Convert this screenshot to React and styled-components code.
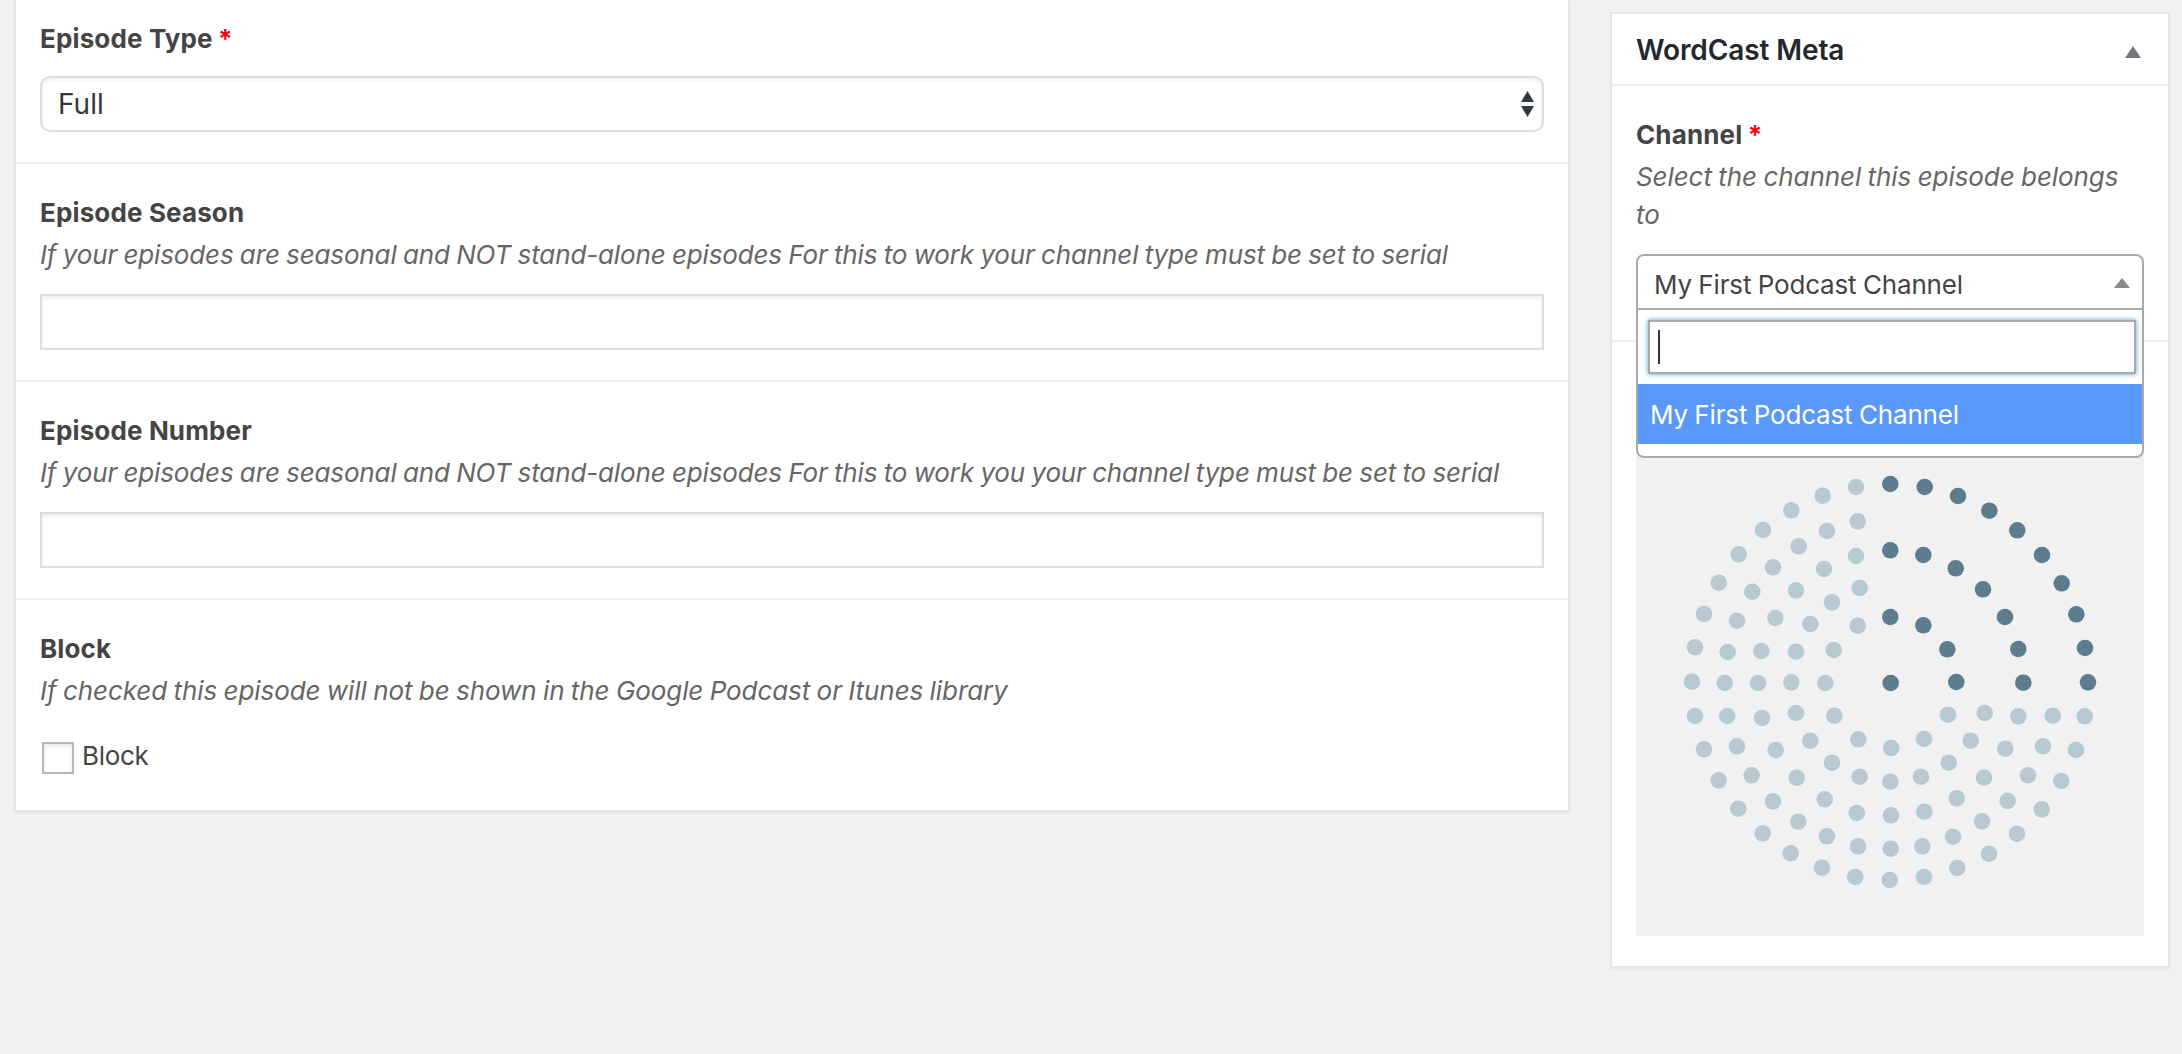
import React from "react";
import styled, { createGlobalStyle } from "styled-components";

const GlobalStyle = createGlobalStyle`
  *, *::before, *::after { box-sizing: border-box; }
  body {
    margin: 0;
    background: #f1f1f1;
    color: #444;
    font-family: Inter, "Liberation Sans", sans-serif;
    font-size: 26px;
  }
`;

const Page = styled.div`
  display: flex;
  align-items: flex-start;
  gap: 40px;
  height: 1054px;
  padding-left: 14px;
  overflow: hidden;
`;

const Panel = styled.section`
  flex: none;
  width: ${(p) => p.$width}px;
  margin-top: ${(p) => p.$top || 0}px;
  background: #fff;
  border: 2px solid #e5e5e5;
  border-top-width: ${(p) => (p.$top ? 2 : 0)}px;
  box-shadow: 0 2px 2px rgba(0, 0, 0, 0.04);
`;

const PanelHeader = styled.header`
  display: flex;
  align-items: center;
  justify-content: space-between;
  height: 72px;
  padding: 2px 27px 0 24px;
  border-bottom: 2px solid #eee;
`;

const PanelTitle = styled.h2`
  margin: 0;
  color: #23282d;
  font-size: 28px;
  font-weight: 600;
  line-height: 36px;
  letter-spacing: -0.11px;
`;

const Toggle = styled.span`
  padding-top: 3px;
`;

const Field = styled.div`
  padding: ${(p) => p.$top ?? 28}px 24px ${(p) => p.$bottom ?? 30}px;
  border-bottom: ${(p) => (p.$last ? 0 : 2)}px solid #eee;
`;

const Label = styled.div`
  font-weight: 700;
  line-height: 42px;
  letter-spacing: 0.14px;
`;

const Required = styled.span`
  margin-left: -1px;
  color: #ff0018;
`;

const Description = styled.p`
  margin: 2px 0 20px;
  color: #666;
  font-style: italic;
  line-height: 38px;
  letter-spacing: ${(p) => p.$tracking ?? -0.14}px;
  word-spacing: -0.8px;
`;

const TextInput = styled.input`
  display: block;
  width: 100%;
  height: 56px;
  padding: 0 12px;
  border: 2px solid #ddd;
  outline: none;
  background: #fff;
  box-shadow: inset 0 2px 4px rgba(0, 0, 0, 0.07);
`;

const SelectBox = styled.div`
  display: flex;
  align-items: center;
  justify-content: space-between;
  height: 56px;
  margin-top: 16px;
  padding: 0 8px 0 16px;
  border: 2px solid #ddd;
  border-radius: 10px;
  box-shadow: inset 0 2px 4px rgba(0, 0, 0, 0.07);
  color: #32373c;
  font-size: 28px;
`;

const CheckRow = styled.label`
  display: flex;
  gap: 8px;
  height: 32px;
  margin: 32px 0 0 2px;
  line-height: 28px;
  letter-spacing: -0.3px;
`;

const Checkbox = styled.span`
  width: 32px;
  height: 32px;
  border: 2px solid #b4b9be;
  background: #fff;
  box-shadow: inset 0 2px 4px rgba(0, 0, 0, 0.1);
`;

const Combo = styled.div`
  position: relative;
  letter-spacing: -0.16px;
  word-spacing: -0.7px;
`;

const ComboTrigger = styled.div`
  display: flex;
  align-items: center;
  justify-content: space-between;
  height: 56px;
  padding: 2px 12px 0 16px;
  border: 2px solid #aaa;
  border-radius: 8px 8px 0 0;
`;

const ComboValue = styled.span`
  padding-top: 3px;
`;

const ComboMenu = styled.div`
  position: absolute;
  z-index: 1;
  top: 100%;
  left: 0;
  right: 0;
  height: 148px;
  border: 2px solid #aaa;
  border-top: 0;
  border-radius: 0 0 8px 8px;
  background: #fff;
`;

const SearchBox = styled.div`
  display: flex;
  align-items: center;
  height: 54px;
  margin: 10px 6px 10px 10px;
  padding-left: 8px;
  border: 2px solid #aaa;
  box-shadow: 0 0 5px rgba(30, 140, 190, 0.8);
`;

const Caret = styled.span`
  width: 2px;
  height: 34px;
  background: #32373c;
`;

const Option = styled.div`
  height: 60px;
  padding-left: 12px;
  background: #5a98fa;
  color: #fff;
  line-height: 61px;
`;

const ArtFrame = styled.div`
  height: 508px;
  background: #f1f1f1;
`;

const Drawing = styled.svg`
  display: block;
  flex: none;
`;

const DARK = [
  [254.3, 56], [288.7, 59], [322, 68], [353.3, 82.7], [381.3, 102.3], [406, 127], [425.7, 155.3], [440.3, 186.3], [449, 220], [452, 254.3],
  [254.3, 122.3], [287.3, 127], [319.7, 140.3], [347, 161.3], [369, 189], [382.3, 221], [387.3, 254.7],
  [254.3, 189], [287.3, 197.3], [311.3, 221.3], [320.3, 254], [254.7, 255],
];

const LIGHT = [
  [220, 59], [186.7, 67.7], [155.3, 82.3], [127, 102], [102.7, 126.3], [82.7, 154.7], [68, 186], [59, 219.3], [56, 253.7],
  [221.7, 93.3], [191, 103], [162.7, 118.3], [137, 139.3], [116.3, 163.7], [101, 192.7], [91.7, 224], [88.7, 255],
  [220, 128], [188, 141], [160, 162.3], [139.3, 190], [125.3, 223], [122, 255],
  [223.7, 160], [196, 174.3], [174.3, 196], [160, 223.7], [155.3, 254.3],
  [221.7, 197.7], [197.7, 222], [189.3, 255],
  [59, 288], [91.3, 288], [126, 290], [160, 285], [198.3, 287.7],
  [68, 321.3], [101, 318.3], [139.7, 322], [174.3, 312.7], [222.3, 311.3], [255.3, 320],
  [82.7, 352.3], [115.7, 347.3], [160.7, 349.7], [196, 334.7], [223.7, 348.7], [254.3, 353.7],
  [102.3, 380.7], [137, 373.3], [188.7, 371.3], [220.7, 385], [255, 387.3],
  [126.7, 405.3], [162.3, 393.7], [191, 408.3], [222, 418.3], [254.7, 420.7],
  [154.7, 425.3], [186, 439.7], [219.3, 449], [253.7, 452],
  [312, 286.7], [348.7, 285], [382.3, 288.3], [416.7, 287.7], [448.7, 288.3],
  [288, 311], [334.7, 312.7], [369.3, 320.7], [407, 318.3], [440, 322],
  [312.7, 334.7], [285, 348.7], [348, 349.7], [392, 347.3], [425.3, 353],
  [320.7, 370.3], [371.7, 373], [405.7, 381.3], [288.3, 383.7], [346, 393.3],
  [381, 405.7], [286.3, 418.3], [317, 408.7], [353, 425.7], [321.3, 440], [288, 449],
];

function Dots({ points, color }) {
  return (
    <g fill={color}>
      {points.map(([x, y]) => (
        <circle key={`${x}-${y}`} cx={x} cy={y} r="8.3" />
      ))}
    </g>
  );
}

function Triangle({ width, height, color }) {
  return (
    <Drawing width={width} height={height} viewBox={`0 0 ${width} ${height}`}>
      <path d={`M0 ${height}L${width / 2} 0L${width} ${height}Z`} fill={color} />
    </Drawing>
  );
}

export default function App() {
  return (
    <>
      <GlobalStyle />
      <Page>
        <Panel as="main" $width={1556}>
          <Field $top={18}>
            <Label>Episode Type <Required>*</Required></Label>
            <SelectBox>
              Full
              <Drawing width="13" height="26" viewBox="0 0 13 26">
                <path d="M0 11L6.5 0L13 11ZM0 15H13L6.5 26Z" fill="#32373c" />
              </Drawing>
            </SelectBox>
          </Field>
          <Field>
            <Label>Episode Season</Label>
            <Description>
              If your episodes are seasonal and NOT stand-alone episodes For this to work your channel type must be set to serial
            </Description>
            <TextInput />
          </Field>
          <Field>
            <Label>Episode Number</Label>
            <Description>
              If your episodes are seasonal and NOT stand-alone episodes For this to work you your channel type must be set to serial
            </Description>
            <TextInput />
          </Field>
          <Field $last $bottom={36}>
            <Label>Block</Label>
            <Description $tracking={-0.08}>
              If checked this episode will not be shown in the Google Podcast or Itunes library
            </Description>
            <CheckRow><Checkbox />Block</CheckRow>
          </Field>
        </Panel>

        <Panel as="aside" $width={560} $top={12}>
          <PanelHeader>
            <PanelTitle>WordCast Meta</PanelTitle>
            <Toggle><Triangle width={16} height={12} color="#72777c" /></Toggle>
          </PanelHeader>
          <Field>
            <Label>Channel <Required>*</Required></Label>
            <Description $tracking={-0.07}>Select the channel this episode belongs to</Description>
            <Combo>
              <ComboTrigger>
                <ComboValue>My First Podcast Channel</ComboValue>
                <Triangle width={16} height={10} color="#888" />
              </ComboTrigger>
              <ComboMenu>
                <SearchBox><Caret /></SearchBox>
                <Option>My First Podcast Channel</Option>
              </ComboMenu>
            </Combo>
          </Field>
          <Field $last $top={86}>
            <ArtFrame>
              <Drawing width="508" height="508" viewBox="0 0 508 508">
                <Dots points={DARK} color="#5d7d8e" />
                <Dots points={LIGHT} color="#b8c9d2" />
              </Drawing>
            </ArtFrame>
          </Field>
        </Panel>
      </Page>
    </>
  );
}
